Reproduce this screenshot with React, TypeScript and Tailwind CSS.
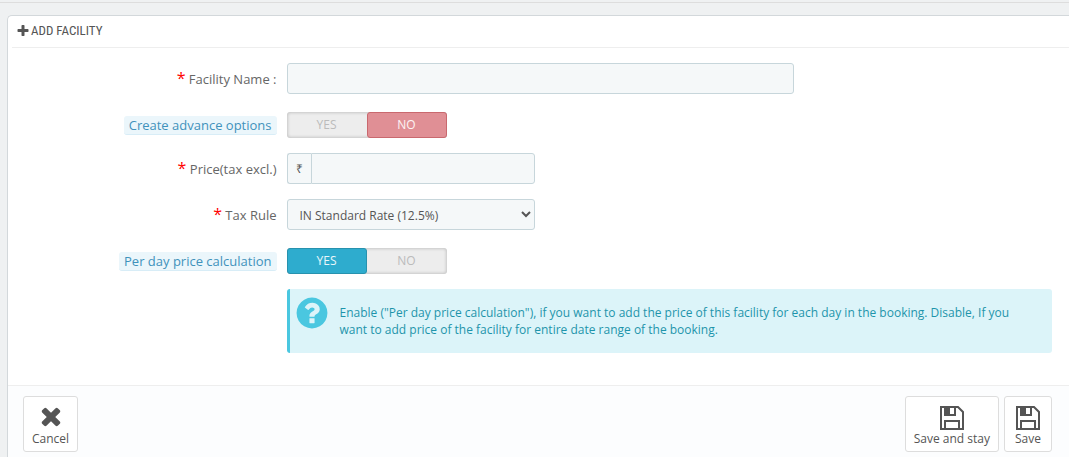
import type { ReactNode } from "react";

function Icon({ d, className }: { d: string; className: string }) {
  return (
    <svg viewBox="0 0 1792 1792" fill="currentColor" aria-hidden="true" className={className}>
      <path d={d} />
    </svg>
  );
}

const PLUS =
  "M1600 736v192q0 40-28 68t-68 28h-416v416q0 40-28 68t-68 28h-192q-40 0-68-28t-28-68v-416h-416q-40 0-68-28t-28-68v-192q0-40 28-68t68-28h416v-416q0-40 28-68t68-28h192q40 0 68 28t28 68v416h416q40 0 68 28t28 68z";
const TIMES =
  "M1490 1322q0 40-28 68l-136 136q-28 28-68 28t-68-28l-294-294-294 294q-28 28-68 28t-68-28l-136-136q-28-28-28-68t28-68l294-294-294-294q-28-28-28-68t28-68l136-136q28-28 68-28t68 28l294 294 294-294q28-28 68-28t68 28l136 136q28 28 28 68t-28 68l-294 294 294 294q28 28 28 68z";
const QUESTION =
  "M1024 1376v-192q0-14-9-23t-23-9h-192q-14 0-23 9t-9 23v192q0 14 9 23t23 9h192q14 0 23-9t9-23zm256-672q0-88-55.5-163t-138.5-116-170-41q-243 0-371 213-15 24 8 42l132 100q7 6 19 6 16 0 25-12 53-68 86-92 34-24 86-24 48 0 85.5 26t37.5 59q0 38-20 61t-68 45q-63 28-115.5 86.5t-52.5 125.5v36q0 14 9 23t23 9h192q14 0 23-9t9-23q0-19 21.5-49.5t54.5-49.5q32-18 49-28.5t46-35 44.5-48 28-60.5 12.5-81zm384 192q0 209-103 385.5t-279.5 279.5-385.5 103-385.5-103-279.5-279.5-103-385.5 103-385.5 279.5-279.5 385.5-103 385.5 103 279.5 279.5 103 385.5z";

function FloppyIcon() {
  return (
    <svg viewBox="0 0 24 24" aria-hidden="true" className="size-6" fill="none" stroke="currentColor" strokeWidth="2">
      <path d="M1 1H18L23 6V23H1Z" />
      <path d="M5 23V15H19V23" />
      <path d="M5 1V9H15V1" />
      <path d="M4 1H10V9H4Z" fill="currentColor" stroke="none" />
    </svg>
  );
}

function Row({ label, className = "", children }: { label?: ReactNode; className?: string; children: ReactNode }) {
  return (
    <div className={`flex items-center gap-[10px] ${className}`}>
      <div className="w-1/4 shrink-0 text-right text-[13px] leading-[18px] text-[#666]">{label}</div>
      <div className="min-w-0 flex-1">{children}</div>
    </div>
  );
}

function Required({ htmlFor, children }: { htmlFor: string; children: ReactNode }) {
  return (
    <label htmlFor={htmlFor} className="block">
      <span className="text-base leading-none text-[#f00]">*</span> {children}
    </label>
  );
}

function Hint({ id, children }: { id: string; children: ReactNode }) {
  return (
    <span
      id={id}
      className="inline-block rounded-[3px] border-b border-[#d8edf7] bg-[#ebf6fb] px-[5px] align-top text-[#4192bb]"
    >
      {children}
    </span>
  );
}

function Switch({ name, labelId, value }: { name: string; labelId: string; value: "yes" | "no" }) {
  const option =
    "flex flex-1 cursor-pointer items-center justify-center rounded-[3px] border border-transparent text-[#bbb]";
  return (
    <div
      role="radiogroup"
      aria-labelledby={labelId}
      className="flex h-[26px] w-40 rounded-[3px] bg-[#ededed] text-xs shadow-[inset_0_0_3px_1px_rgba(0,0,0,0.17)]"
    >
      <label
        className={`${option} has-checked:border-[#2792ae] has-checked:bg-[#2eacce] has-checked:text-white/90`}
      >
        <input type="radio" name={name} value="yes" defaultChecked={value === "yes"} className="sr-only" />
        YES
      </label>
      <label
        className={`${option} has-checked:border-[#c9686e] has-checked:bg-[#e08f95] has-checked:text-white/90`}
      >
        <input type="radio" name={name} value="no" defaultChecked={value === "no"} className="sr-only" />
        NO
      </label>
    </div>
  );
}

function ToolButton({ icon, children }: { icon: ReactNode; children: ReactNode }) {
  return (
    <button
      type="button"
      className="flex h-14 min-w-12 cursor-pointer flex-col items-center justify-end rounded-[3px] border border-[#ddd] bg-white px-2 pb-1 text-xs text-[#555]"
    >
      {icon}
      <span className="leading-[17px]">{children}</span>
    </button>
  );
}

const FIELD = "h-[31px] border border-[#c7d6db] bg-[#f5f8f9] text-xs text-[#555] outline-none";

export default function App() {
  return (
    <div className="min-h-screen overflow-x-hidden bg-[#eff1f2] pt-[2px] font-['Open_Sans',sans-serif]">
      <div className="border-t border-[#ddd] pt-3 pl-[7px]">
        <form className="rounded-tl-[5px] border-t border-l border-[#d3d8db] bg-white" aria-labelledby="panel-title">
          <h1
            id="panel-title"
            className="ml-1 flex h-8 items-center gap-px border-b border-[#eee] pb-[2px] pl-1 font-['Liberation_Sans_Narrow','Roboto_Condensed','Open_Sans_Condensed',sans-serif] text-[13px] text-[#555]"
          >
            <Icon d={PLUS} className="size-[14px]" />
            ADD FACILITY
          </h1>

          <div className="flex flex-col gap-[15px] pt-[15px] pr-[17px] pb-8 pl-[10px]">
            <Row label={<Required htmlFor="facility-name">Facility Name :</Required>}>
              <input id="facility-name" type="text" className={`${FIELD} block w-[66.3%] rounded-[3px] px-2`} />
            </Row>
            <Row className="pt-[3px]" label={<Hint id="advance-label">Create advance options</Hint>}>
              <Switch name="advance" labelId="advance-label" value="no" />
            </Row>
            <Row label={<Required htmlFor="price">Price(tax excl.)</Required>}>
              <div className="flex w-[32.4%]">
                <span className={`${FIELD} flex w-6 shrink-0 items-center justify-center rounded-l-[3px] border-r-0`}>
                  ₹
                </span>
                <input id="price" type="text" className={`${FIELD} min-w-0 flex-1 rounded-r-[3px] px-2`} />
              </div>
            </Row>
            <Row label={<Required htmlFor="tax-rule">Tax Rule</Required>}>
              <select id="tax-rule" className={`${FIELD} block w-[32.4%] rounded-[3px] px-2 pt-px`}>
                <option>IN Standard Rate (12.5%)</option>
              </select>
            </Row>
            <Row className="pt-[3px]" label={<Hint id="per-day-label">Per day price calculation</Hint>}>
              <Switch name="per-day" labelId="per-day-label" value="yes" />
            </Row>
            <Row>
              <div className="flex h-16 gap-[10px] rounded-[3px] border-l-[3px] border-[#4ac7e0] bg-[#dcf4f9] pt-[6px] pr-8 pl-1 text-xs leading-[17px] text-[#1e94ab]">
                <Icon d={QUESTION} className="size-9 shrink-0 text-[#4ac7e0]" />
                <p className="pt-[9px]">
                  Enable ("Per day price calculation"), if you want to add the price of this facility for each day in
                  the booking. Disable, If you want to add price of the facility for entire date range of the booking.
                </p>
              </div>
            </Row>
          </div>

          <div className="flex gap-[5px] border-t border-[#eee] bg-[#fcfdfe] pt-[10px] pr-[17px] pb-[5px] pl-[15px]">
            <div className="mr-auto">
              <ToolButton icon={<Icon d={TIMES} className="size-7" />}>Cancel</ToolButton>
            </div>
            <ToolButton icon={<FloppyIcon />}>Save and stay</ToolButton>
            <ToolButton icon={<FloppyIcon />}>Save</ToolButton>
          </div>
        </form>
      </div>
    </div>
  );
}
